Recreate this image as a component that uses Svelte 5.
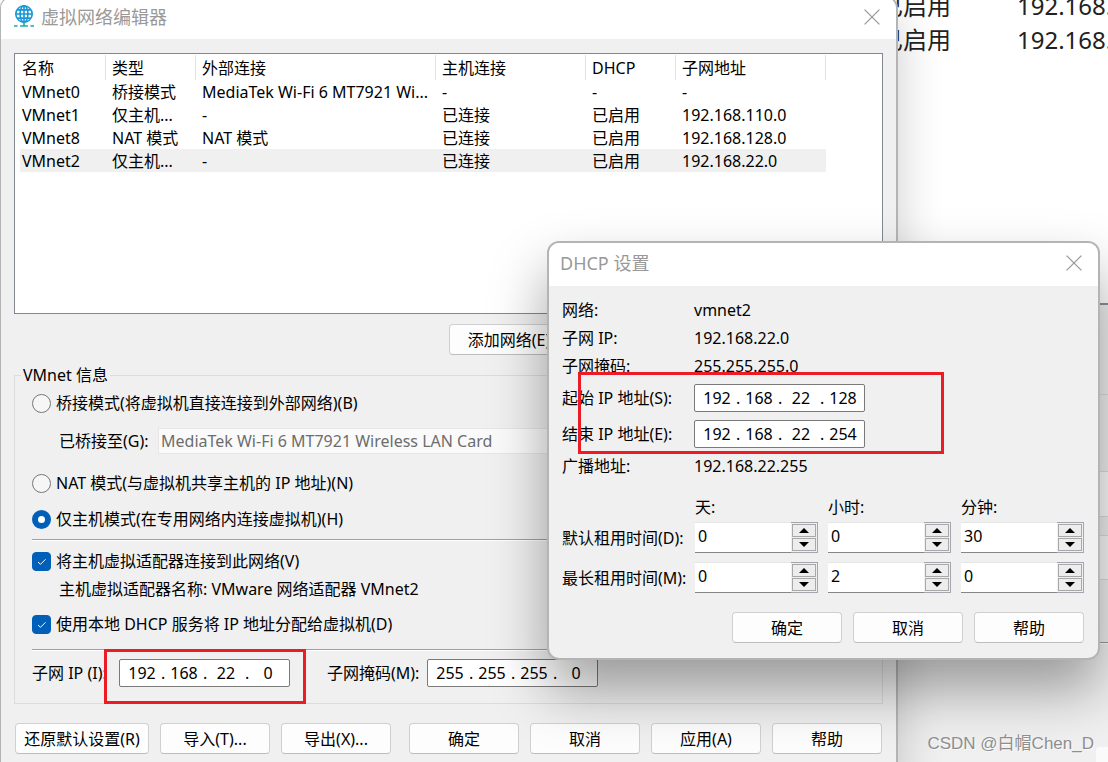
<script>
  const columns = ['名称', '类型', '外部连接', '主机连接', 'DHCP', '子网地址'];
  const networks = [
    ['VMnet0', '桥接模式', 'MediaTek Wi-Fi 6 MT7921 Wi...', '-', '-', '-'],
    ['VMnet1', '仅主机...', '-', '已连接', '已启用', '192.168.110.0'],
    ['VMnet8', 'NAT 模式', 'NAT 模式', '已连接', '已启用', '192.168.128.0'],
    ['VMnet2', '仅主机...', '-', '已连接', '已启用', '192.168.22.0']
  ];
  let selected = $state('VMnet2');
  let mode = $state('host');
  let connectHost = $state(true);
  let useDhcp = $state(true);

  const units = ['天:', '小时:', '分钟:'];
  let leases = $state([
    { id: 'default', label: '默认租用时间(D):', values: [0, 0, 30] },
    { id: 'max', label: '最长租用时间(M):', values: [0, 2, 0] }
  ]);
  function step(row, i, by) {
    row.values[i] = Math.max(0, Number(row.values[i]) + by);
  }
</script>

{#snippet ipField(id, parts)}
  <div class="ip" role="group" aria-labelledby={id + '-label'}>
    {#each parts as part, i}
      {#if i > 0}<span class="dot">.</span>{/if}
      <input id={id + '-' + i} type="text" inputmode="numeric" maxlength="3" value={part} aria-labelledby={id + '-label'} />
    {/each}
  </div>
{/snippet}

{#snippet closeIcon()}
  <svg width="16" height="16" viewBox="0 0 16 16" fill="none" stroke="#999" stroke-width="1.3" aria-hidden="true">
    <path d="M.6.6 15.4 15.4M15.4.6.6 15.4" />
  </svg>
{/snippet}

<div class="desktop">
  <div class="backdrop">
    <div class="enlarged">
      <p><span>已启用</span><span>192.168.</span></p>
      <p><span>已启用</span><span>192.168.</span></p>
    </div>
    <div class="under">
      <i class="strip one"></i>
      <i class="strip two"></i>
      <i class="strip three"></i>
      <i class="tail"></i>
      <i class="corner"></i>
    </div>
  </div>

  <main class="window editor">
    <header class="titlebar">
      <svg class="globe" width="20" height="23" viewBox="0 0 20 23" fill="none" aria-hidden="true">
        <g stroke="#1698d5" stroke-width="1.6">
          <circle cx="10" cy="9" r="8.2" />
          <ellipse cx="10" cy="9" rx="3.9" ry="8.2" />
          <path d="M10 .8v16.4M1.8 9h16.4M3.2 4.9h13.6M3.2 13.1h13.6" />
        </g>
        <path d="M10 17v3.6M6 21h8M0 21h3.5M16.5 21H20" stroke="#22a9a4" stroke-width="1.6" />
      </svg>
      <h1>虚拟网络编辑器</h1>
      <button class="close" aria-label="关闭">{@render closeIcon()}</button>
    </header>

    <div class="editor-body">
      <div class="list">
        <table>
          <thead>
            <tr>{#each columns as c, i}<th class={'c' + i}>{c}</th>{/each}</tr>
          </thead>
          <tbody>
            {#each networks as n}
              <tr class:selected={selected === n[0]} onclick={() => (selected = n[0])}>
                {#each n as cell}<td>{cell}</td>{/each}
              </tr>
            {/each}
          </tbody>
        </table>
      </div>

      <div class="list-actions"><button class="btn">添加网络(E)...</button></div>

      <fieldset>
        <legend>VMnet 信息</legend>
        <label class="option"><input type="radio" value="bridged" bind:group={mode} />桥接模式(将虚拟机直接连接到外部网络)(B)</label>
        <div class="bridge">
          <label for="bridge-to">已桥接至(G):</label>
          <select id="bridge-to" disabled>
            <option>MediaTek Wi-Fi 6 MT7921 Wireless LAN Card</option>
          </select>
        </div>
        <label class="option nat"><input type="radio" value="nat" bind:group={mode} />NAT 模式(与虚拟机共享主机的 IP 地址)(N)</label>
        <label class="option"><input type="radio" value="host" bind:group={mode} />仅主机模式(在专用网络内连接虚拟机)(H)</label>
        <hr />
        <label class="option"><input type="checkbox" bind:checked={connectHost} />将主机虚拟适配器连接到此网络(V)</label>
        <p class="adapter">主机虚拟适配器名称: VMware 网络适配器 VMnet2</p>
        <label class="option"><input type="checkbox" bind:checked={useDhcp} />使用本地 DHCP 服务将 IP 地址分配给虚拟机(D)</label>
        <hr />
        <div class="subnet">
          <label id="subnet-label" for="subnet-0">子网 IP (I):</label>
          {@render ipField('subnet', ['192', '168', '22', '0'])}
          <label id="mask-label" class="mask" for="mask-0">子网掩码(M):</label>
          {@render ipField('mask', ['255', '255', '255', '0'])}
          <i class="mark mark-subnet"></i>
        </div>
      </fieldset>

      <footer class="actions">
        <button class="btn wide">还原默认设置(R)</button>
        <button class="btn">导入(T)...</button>
        <button class="btn">导出(X)...</button>
        <button class="btn push">确定</button>
        <button class="btn">取消</button>
        <button class="btn">应用(A)</button>
        <button class="btn">帮助</button>
      </footer>
    </div>
  </main>

  <section class="window dialog" role="dialog" aria-labelledby="dhcp-title">
    <header class="titlebar">
      <h2 id="dhcp-title">DHCP 设置</h2>
      <button class="close" aria-label="关闭">{@render closeIcon()}</button>
    </header>
    <div class="dialog-body">
      <div class="rows">
        <span>网络:</span><span>vmnet2</span>
        <span>子网 IP:</span><span>192.168.22.0</span>
        <span>子网掩码:</span><span>255.255.255.0</span>
        <label id="start-label" for="start-0">起始 IP 地址(S):</label>
        {@render ipField('start', ['192', '168', '22', '128'])}
        <label id="end-label" for="end-0">结束 IP 地址(E):</label>
        {@render ipField('end', ['192', '168', '22', '254'])}
        <span>广播地址:</span><span>192.168.22.255</span>
        <i class="mark mark-range"></i>
      </div>

      <div class="leases">
        <span></span>
        {#each units as u}<span>{u}</span>{/each}
        {#each leases as row}
          <label for={row.id + '-0'}>{row.label}</label>
          {#each row.values as _, i}
            <div class="spin">
              <input id={row.id + '-' + i} type="text" inputmode="numeric" aria-label={row.label + ' ' + units[i]} bind:value={row.values[i]} />
              <div class="arrows">
                <button aria-label="增加" onclick={() => step(row, i, 1)}><svg width="10" height="5" viewBox="0 0 10 5"><path d="M0 5 5 0l5 5z" /></svg></button>
                <button aria-label="减少" onclick={() => step(row, i, -1)}><svg width="10" height="5" viewBox="0 0 10 5"><path d="M0 0 5 5l5-5z" /></svg></button>
              </div>
            </div>
          {/each}
        {/each}
      </div>

      <footer class="dialog-actions">
        <button class="btn">确定</button>
        <button class="btn">取消</button>
        <button class="btn">帮助</button>
      </footer>
    </div>
  </section>

  <div class="watermark">CSDN @白帽Chen_D</div>
</div>

<style>
  :global(body) {
    margin: 0;
    overflow: hidden;
  }
  .desktop {
    position: relative;
    height: 100vh;
    overflow: hidden;
    background: #fff;
    color: #000;
    font: 16px/24px "Noto Sans", "Noto Sans CJK SC", sans-serif;
  }
  .desktop * {
    box-sizing: border-box;
  }
  button, input, select {
    font: inherit;
    color: inherit;
    margin: 0;
  }
  h1, h2, p {
    margin: 0;
    font-weight: 400;
  }

  /* magnified window behind the two dialogs */
  .backdrop {
    position: absolute;
    inset: 0 0 0 auto;
    width: 229px;
    display: flex;
    flex-direction: column;
    overflow: hidden;
  }
  .enlarged {
    flex: none;
    height: 314px;
    margin-top: -11px;
    font-size: 24px;
    line-height: 34px;
    white-space: nowrap;
    color: #222;
  }
  .enlarged p {
    display: grid;
    grid-template-columns: 138px 1fr;
  }
  .under {
    flex: 1;
    display: flex;
    flex-direction: column;
    border-top: 2px solid #8a8f9c;
    background: #f0f0f0;
  }
  .strip {
    border: solid #dcdcdc;
    border-width: 1px 0;
  }
  .one {
    margin-top: 89px;
    height: 77px;
    border-bottom: 0;
  }
  .two {
    height: 46px;
    background: #fdfdfd;
  }
  .three {
    margin-top: 18px;
    height: 45px;
    background: #fafafa;
  }
  .tail {
    margin-top: 62px;
    border-top: 1px solid #999;
    border-bottom: 1px solid #fff;
  }
  .corner {
    width: 12px;
    height: 15px;
    margin: auto 0 0 auto;
    border-radius: 4px 0 0 0;
    background: #fafafa;
  }

  .window {
    position: absolute;
    background: #f0f0f0;
    border: 2px solid #b4b4b4;
    border-radius: 12px;
  }
  .titlebar {
    display: flex;
    align-items: center;
    background: #fff;
    border-radius: 10px 10px 0 0;
    color: #999;
  }
  .titlebar h1, .titlebar h2 {
    flex: 1;
    font-size: 18px;
    line-height: 26px;
  }
  .close {
    display: flex;
    padding: 0;
    border: 0;
    background: none;
  }

  .editor {
    inset: -4px 210px -20px 0;
    border-left-width: 1px;
    box-shadow: 0 20px 48px rgba(0, 0, 0, 0.2);
  }
  .editor .titlebar {
    height: 41px;
    padding: 0 16px 4px 13px;
    gap: 7px;
  }
  .editor-body {
    padding: 14px 13px;
  }
  .list {
    height: 261px;
    padding-top: 1px;
    border: 1px solid #828790;
    background: #fff;
    overflow: hidden;
  }
  table {
    width: 806px;
    margin-left: 5px;
    border-spacing: 0;
    table-layout: fixed;
  }
  th {
    height: 25px;
    padding: 0 0 0 6px;
    border-right: 1px solid #e2e2e2;
    font-weight: 400;
    text-align: left;
  }
  td {
    height: 23px;
    padding: 1px 0 0 6px;
    line-height: 22px;
    white-space: nowrap;
  }
  th:first-child, td:first-child {
    padding-left: 2px;
  }
  .c0 { width: 86px; }
  .c1, .c4 { width: 90px; }
  .c2 { width: 240px; }
  .c3, .c5 { width: 150px; }
  .selected {
    background: #f0f0f0;
  }

  .btn {
    width: 110px;
    height: 31px;
    padding: 0;
    border: 1px solid #d0d0d0;
    border-bottom-color: #bdbdbd;
    border-radius: 4px;
    background: #fdfdfd;
    white-space: nowrap;
  }
  .btn.wide {
    width: 134px;
  }
  .list-actions {
    padding: 10px 0 0 50%;
  }
  .list-actions .btn {
    width: 134px;
  }

  fieldset {
    margin: 8px 0 0;
    padding: 4px 17px 16px;
    border: 1px solid #dcdcdc;
    min-width: 0;
  }
  legend {
    margin-left: -11px;
    padding: 0 2px;
    line-height: 24px;
  }
  .option {
    display: flex;
    align-items: center;
    gap: 5px;
    height: 24px;
  }
  .option input {
    appearance: none;
    flex: none;
    width: 19px;
    height: 19px;
    border: 1px solid #767676;
    background: #f6f6f6;
  }
  .option input[type='radio'] {
    border-radius: 50%;
  }
  .option input[type='radio']:checked {
    border: 6px solid #005fb8;
    background: #fff;
  }
  .option input[type='checkbox'] {
    border-radius: 4px;
  }
  .option input[type='checkbox']:checked {
    border-color: #005fb8;
    background: #005fb8 url("data:image/svg+xml,%3Csvg xmlns='http://www.w3.org/2000/svg' viewBox='0 0 17 17'%3E%3Cpath d='M5 9l2.5 2.3L12.5 6.3' fill='none' stroke='white' stroke-width='1'/%3E%3C/svg%3E");
  }
  .bridge {
    display: grid;
    grid-template-columns: 99px 480px;
    align-items: center;
    margin: 13px 0 17px;
    padding-left: 27px;
  }
  .bridge select {
    appearance: none;
    height: 26px;
    padding: 0 2px;
    border: 1px solid #e6e6e6;
    border-radius: 0;
    background: #fafafa;
    color: #6d6d6d;
    opacity: 1;
  }
  .nat {
    margin-bottom: 12px;
  }
  hr {
    height: 2px;
    margin: 8px 106px 8px 0;
    border: 0;
    border-top: 1px solid #a0a0a0;
    border-bottom: 1px solid #fff;
  }
  .adapter {
    margin: 4px 0 11px;
    padding-left: 27px;
  }
  fieldset hr:last-of-type {
    margin: 13px 0 8px;
  }
  .subnet {
    position: relative;
    display: flex;
    align-items: center;
  }
  .subnet label {
    flex: none;
    width: 87px;
    white-space: nowrap;
  }
  .subnet .mask {
    width: 100px;
    margin-left: 37px;
  }

  .ip {
    display: flex;
    align-items: center;
    width: 171px;
    height: 28px;
    padding-left: 3px;
    border: 1px solid #7a7a7a;
    border-radius: 2px;
    background: #fff;
  }
  .ip input {
    width: 38px;
    height: 24px;
    padding: 0;
    border: 0;
    background: none;
    text-align: center;
    outline: none;
  }
  .ip .dot {
    width: 4px;
  }

  .actions {
    display: flex;
    gap: 11px;
    margin-top: 19px;
    padding: 0 1px;
  }
  .push {
    margin-left: auto;
  }

  .mark {
    position: absolute;
    border: 3px solid #ed1c24;
    pointer-events: none;
  }
  .mark-subnet {
    left: 72px;
    top: -10px;
    width: 202px;
    height: 55px;
  }
  .mark-range {
    left: 16px;
    top: 76px;
    width: 366px;
    height: 82px;
  }

  .dialog {
    top: 241px;
    left: 547px;
    right: 8px;
    box-shadow: 0 30px 56px rgba(0, 0, 0, 0.36);
  }
  .dialog .titlebar {
    height: 43px;
    padding: 0 16px 3px 11px;
  }
  .dialog-body {
    padding: 10px 14px 15px 13px;
  }
  .rows {
    position: relative;
    display: grid;
    grid-template-columns: 132px 1fr;
    grid-template-rows: 28px 28px 28px 36px 36px 28px;
    align-items: center;
  }
  .leases {
    display: grid;
    grid-template-columns: 123px repeat(3, minmax(0, 1fr));
    grid-template-rows: 12px 31px 31px;
    gap: 9px 10px;
    align-items: center;
    margin-top: 21px;
  }
  .leases label {
    white-space: nowrap;
  }
  .spin {
    display: flex;
    height: 31px;
  }
  .spin input {
    flex: 1;
    min-width: 0;
    height: 31px;
    padding: 0 3px 4px;
    border: 0;
    border-top: 1px solid #e6e6e6;
    border-bottom: 1px solid #868686;
    background: #fff;
    outline: none;
  }
  .arrows {
    display: flex;
    flex-direction: column;
    gap: 1px;
    width: 27px;
    padding: 1px;
    border: 1px solid #a5a5ad;
    border-left: 0;
  }
  .arrows button {
    flex: 1;
    display: flex;
    align-items: center;
    justify-content: center;
    min-height: 0;
    padding: 0;
    border: 1px solid #a8a8a8;
    background: #ededed;
  }
  .dialog-actions {
    display: flex;
    justify-content: flex-end;
    gap: 11px;
    margin-top: 19px;
  }

  .watermark {
    position: absolute;
    right: 14px;
    bottom: 6px;
    font: 17px/24px "Liberation Sans", "Noto Sans CJK SC", sans-serif;
    color: #8e8e8e;
    text-shadow: 1px 1px 0 rgba(255, 255, 255, 0.7);
    white-space: nowrap;
  }
</style>
